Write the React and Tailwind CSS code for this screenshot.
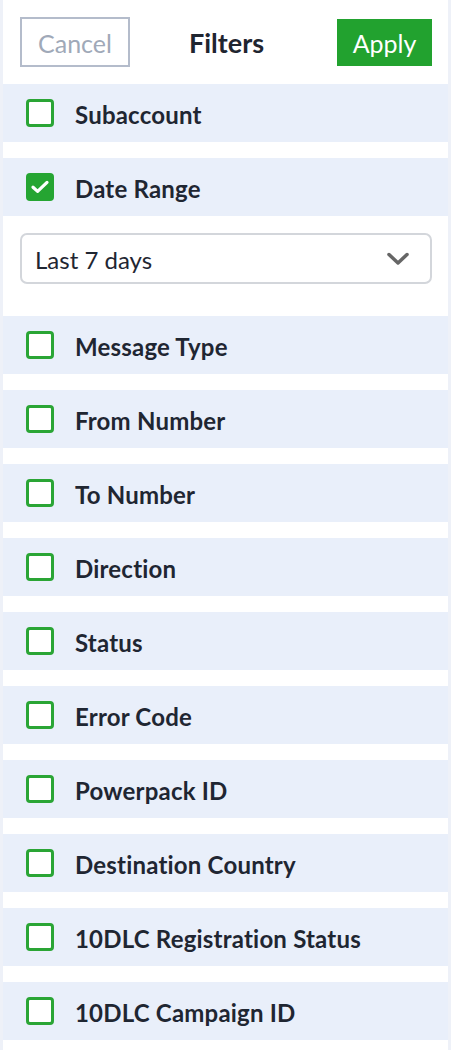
import { useState } from "react";

const FILTERS = [
  "Subaccount",
  "Date Range",
  "Message Type",
  "From Number",
  "To Number",
  "Direction",
  "Status",
  "Error Code",
  "Powerpack ID",
  "Destination Country",
  "10DLC Registration Status",
  "10DLC Campaign ID",
];

const Checkbox = ({ checked }) =>
  checked ? (
    <span className="flex h-[28px] w-[28px] items-center justify-center rounded-[4px] bg-[#25a532]">
      <svg width="20" height="16" viewBox="0 0 20 16" fill="none">
        <path
          d="M3 8.2 L7.6 12.4 L17 3.4"
          stroke="white"
          strokeWidth="3.2"
          strokeLinecap="round"
          strokeLinejoin="round"
        />
      </svg>
    </span>
  ) : (
    <span className="h-[28px] w-[28px] rounded-[4px] border-[3px] border-[#2aa535] bg-white" />
  );

const App = () => {
  const [checked, setChecked] = useState({ "Date Range": true });

  const toggle = (name) => setChecked({ ...checked, [name]: !checked[name] });

  return (
    <div
      className="h-[1050px] w-[451px] bg-[#eef1f8]"
      style={{ fontFamily: "Lato, 'Open Sans', sans-serif" }}
    >
      <div className="ml-[3px] h-full w-[445px] bg-white">
        {/* HEADER */}
        <div className="flex h-[84px] items-center justify-between pl-[17px] pr-[16px]">
          <button className="h-[50px] w-[110px] border-2 border-[#b4bccb] pt-[3px] text-[25px] text-[#a0a9b8]">
            Cancel
          </button>
          <div className="mr-[14px] pt-[2px] text-[27px] font-bold text-[#1f2530]">Filters</div>
          <button className="h-[47px] w-[95px] bg-[#22a22f] pt-[3px] text-[25px] text-white">
            Apply
          </button>
        </div>

        {/* FILTER LIST */}
        <div className="flex flex-col gap-[16px]">
          {FILTERS.map((name) => (
            <div key={name} className="flex flex-col">
              <div
                className="flex h-[58px] cursor-pointer items-center gap-[21px] bg-[#e9effa] pl-[23px]"
                onClick={() => toggle(name)}
              >
                <Checkbox checked={checked[name]} />
                <span className="pt-[4px] text-[24px] font-bold tracking-[0.2px] text-[#1f2632]">
                  {name}
                </span>
              </div>
              {name === "Date Range" && checked[name] && (
                <div className="pl-[17px] pr-[16px] pb-[16px] pt-[17px]">
                  <div className="flex h-[51px] items-center justify-between rounded-[7px] border-2 border-[#d3d6db] pl-[13px] pr-[20px]">
                    <span className="pt-[2px] text-[24px] text-[#1f2632]">Last 7 days</span>
                    <svg width="24" height="16" viewBox="0 0 24 16" fill="none">
                      <path
                        d="M3 3.5 L12 12 L21 3.5"
                        stroke="#666"
                        strokeWidth="3.5"
                        strokeLinecap="round"
                        strokeLinejoin="round"
                      />
                    </svg>
                  </div>
                </div>
              )}
            </div>
          ))}
        </div>
      </div>
    </div>
  );
};

export default App;
